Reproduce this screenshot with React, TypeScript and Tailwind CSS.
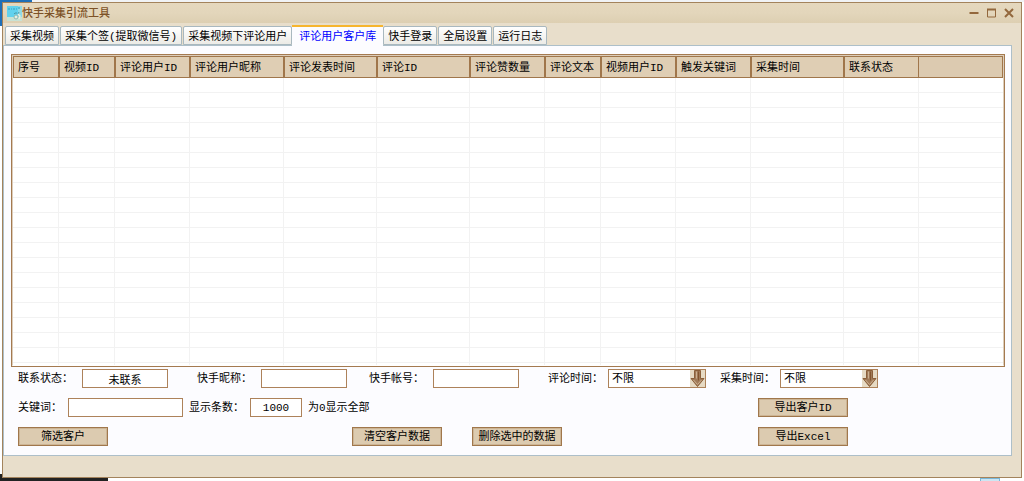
import React, { useState } from 'react';

const tabs = [
  '采集视频',
  '采集个签(提取微信号)',
  '采集视频下评论用户',
  '评论用户客户库',
  '快手登录',
  '全局设置',
  '运行日志',
];

const columns = [
  { title: '序号', width: 46 },
  { title: '视频ID', width: 56 },
  { title: '评论用户ID', width: 75 },
  { title: '评论用户昵称', width: 94 },
  { title: '评论发表时间', width: 93 },
  { title: '评论ID', width: 93 },
  { title: '评论赞数量', width: 75 },
  { title: '评论文本', width: 56 },
  { title: '视频用户ID', width: 75 },
  { title: '触发关键词', width: 75 },
  { title: '采集时间', width: 93 },
  { title: '联系状态', width: 75 },
];

const emptyRows = Array.from({ length: 20 });

const AppIcon: React.FC = () => (
  <svg width="15" height="15" viewBox="0 0 15 15" aria-hidden="true">
    <rect width="15" height="15" fill="#8fd9e6" />
    <rect width="11" height="11" fill="#62d2ee" />
    <rect y="11" width="15" height="4" fill="#c8e2d4" />
    <path d="M1 3h2M4 3h1M6 3h2M9 3h1M11 2h2" stroke="#45b3cf" strokeWidth="1.4" />
    <path d="M7 7l1 1M9 6v2M12 6l-1 2" stroke="#4b9aa8" />
    <circle cx="9" cy="11" r="2" fill="#e6eee4" stroke="#8fb8b0" />
    <path d="M11 8l2 2-1 3" fill="none" stroke="#f0efe0" strokeWidth="1.2" />
  </svg>
);

const ArrowIcon: React.FC = () => (
  <svg
    className="absolute right-px top-px pointer-events-none"
    width="15"
    height="17"
    viewBox="0 0 15 17"
    aria-hidden="true"
  >
    <rect width="15" height="17" fill="#e6dac4" />
    <path d="M4.500 0.500h6v8h3.500L7.500 16.500 1 8.500h3.500z" fill="#a07a58" stroke="#8a5f3a" />
    <path d="M6.500 1.500v7M3.500 10l4 4.500 4-4.500" fill="none" stroke="#cdb090" />
    <path d="M8.500 1.500v9" stroke="#83552f" />
  </svg>
);

interface FieldProps {
  id: string;
  label: string;
  value?: string;
  labelClass?: string;
  inputClass?: string;
}

const TextField: React.FC<FieldProps> = ({ id, label, value = '', labelClass = 'w-16', inputClass = 'w-[86px]' }) => (
  <div className="flex items-center shrink-0">
    <label htmlFor={id} className={labelClass}>{label}</label>
    <input
      id={id}
      defaultValue={value}
      className={`h-[19px] border border-[#ad825a] bg-white text-center outline-none ${inputClass}`}
    />
  </div>
);

const SelectField: React.FC<FieldProps> = ({ id, label }) => (
  <div className="flex items-center shrink-0">
    <label htmlFor={id} className="w-[60px]">{label}</label>
    <div className="relative">
      <select
        id={id}
        className="block w-[98px] h-[19px] appearance-none border border-[#ad825a] bg-white pl-[3px] outline-none"
      >
        <option>不限</option>
      </select>
      <ArrowIcon />
    </div>
  </div>
);

const SkinButton: React.FC<{ children: React.ReactNode }> = ({ children }) => (
  <button
    type="button"
    className="w-[90px] h-[19px] shrink-0 border border-[#a0774c] bg-[#dccbb0] text-center inset-shadow-[0_0_0_1px_#cdb595] pt-px"
  >
    {children}
  </button>
);

const TitleBar: React.FC = () => (
  <header className="flex items-center h-5 shrink-0 pl-1 pr-[7px] text-[#7d5227] bg-linear-to-b from-[#e5d8be] via-[#e3d6bb] to-[#ddcfb2]">
    <AppIcon />
    <h1 className="flex-1 pt-0.5 font-medium">快手采集引流工具</h1>
    <div className="flex items-center gap-2">
      <button type="button" aria-label="最小化">
        <svg width="10" height="10" viewBox="0 0 10 10">
          <path d="M0.500 5h9" stroke="#93683d" strokeWidth="2" />
        </svg>
      </button>
      <button type="button" aria-label="最大化">
        <svg width="9" height="10" viewBox="0 0 9 10">
          <path d="M0.500 1v8h8V1" fill="none" stroke="#93683d" />
          <path d="M0 1.500h9" stroke="#93683d" strokeWidth="2" />
        </svg>
      </button>
      <button type="button" aria-label="关闭">
        <svg width="10" height="10" viewBox="0 0 10 10">
          <path d="M1 1l8 8M9 1L1 9" stroke="#93683d" strokeWidth="2" />
        </svg>
      </button>
    </div>
  </header>
);

const CustomerTable: React.FC = () => (
  <div className="flex-1 min-h-0 overflow-hidden border border-[#a47a50] bg-white">
    <div className="h-full overflow-hidden border border-[#dccdbb] border-b-white">
      <table className="w-full table-fixed border-separate border-spacing-0">
        <colgroup>
          {columns.map((c) => (
            <col key={c.title} style={{ width: c.width }} />
          ))}
          <col />
        </colgroup>
        <thead>
          <tr className="h-[22px] bg-[#dfceb4]">
            {columns.map((c) => (
              <th
                key={c.title}
                className="h-[22px] p-0 pt-0.5 pl-1 text-left font-normal whitespace-nowrap border border-[#a0764b] leading-[18px]"
              >
                {c.title}
              </th>
            ))}
            <td className="h-[22px] p-0 border border-l-0 border-[#a0764b] bg-[#dccab0]" />
          </tr>
        </thead>
        <tbody>
          {emptyRows.map((_, i) => (
            <tr key={i}>
              {columns.map((c) => (
                <td key={c.title} className="h-[15px] p-0 border-b border-r border-[#f2f2f2]" />
              ))}
              <td className="h-[15px] p-0 border-b border-[#f2f2f2]" />
            </tr>
          ))}
        </tbody>
      </table>
    </div>
  </div>
);

const App: React.FC = () => {
  const [active, setActive] = useState(3);

  return (
    <div className="flex flex-col h-screen bg-white text-black text-[11px] leading-4 font-['Liberation_Mono','Noto_Sans_CJK_SC',monospace]">
      <div className="flex h-0.5 shrink-0">
        <div className="w-8 bg-[#1d6fb8]" />
        <div className="flex-1 bg-[#f1f3f5]" />
      </div>

      <div className="flex flex-1 min-h-0">
        <div className="flex flex-col w-0.5 shrink-0">
          <div className="h-6 bg-[#1d6fb8]" />
          <div className="flex-1 bg-white" />
          <div className="h-1 bg-[#222]" />
        </div>

        <div className="flex flex-col flex-1 min-w-0 mr-0.5 border border-[#a3835c] bg-[#e8decb]">
          <TitleBar />

          <nav role="tablist" className="flex items-end h-[22px] gap-px pl-0.5 shrink-0 relative z-10">
            {tabs.map((tab, i) => (
              <button
                key={tab}
                type="button"
                role="tab"
                aria-selected={i === active}
                onClick={() => setActive(i)}
                className={
                  i === active
                    ? 'h-[21px] -mb-px -mx-px px-[7px] pt-px shrink-0 whitespace-nowrap border-t-2 border-[#f6b52e] bg-[#fcfcff] text-[#0000ff]'
                    : 'h-[19px] px-1 pt-0.5 shrink-0 whitespace-nowrap rounded-t-xs border border-[#a9b8bf] bg-linear-to-b from-white to-[#ecebe6]'
                }
              >
                {tab}
              </button>
            ))}
          </nav>

          <main className="flex flex-col flex-1 min-h-0 mr-[9px] mb-[21px] pl-[7px] pr-1.5 pt-2 pb-[9px] border border-[#adbfc9] bg-[#fcfcff]">
            <CustomerTable />

            <form className="flex flex-col gap-2.5 pt-0.5 pl-[7px] shrink-0" onSubmit={(e) => e.preventDefault()}>
              <div className="flex items-center">
                <TextField id="status" label="联系状态：" value="未联系" />
                <div className="flex ml-[29px]">
                  <TextField id="nickname" label="快手昵称：" />
                </div>
                <div className="flex ml-[22px]">
                  <TextField id="account" label="快手帐号：" />
                </div>
                <div className="flex gap-3.5 ml-[29px]">
                  <SelectField id="commentTime" label="评论时间：" />
                  <SelectField id="collectTime" label="采集时间：" />
                </div>
              </div>

              <div className="flex items-center">
                <div className="flex items-center gap-1.5 w-[740px] shrink-0">
                  <TextField id="keyword" label="关键词：" labelClass="w-[50px]" inputClass="w-[115px]" />
                  <TextField id="count" label="显示条数：" value="1000" labelClass="w-[61px]" inputClass="w-[52px]" />
                  <span>为0显示全部</span>
                </div>
                <SkinButton>导出客户ID</SkinButton>
              </div>

              <div className="flex items-center">
                <div className="w-[334px] shrink-0">
                  <SkinButton>筛选客户</SkinButton>
                </div>
                <div className="flex gap-[30px] w-[406px] shrink-0">
                  <SkinButton>清空客户数据</SkinButton>
                  <SkinButton>删除选中的数据</SkinButton>
                </div>
                <SkinButton>导出Excel</SkinButton>
              </div>
            </form>
          </main>
        </div>
      </div>

      <div className="flex h-[3px] shrink-0">
        <div className="w-[108px] bg-[#222]" />
        <div className="flex-1" />
        <div className="w-5 mr-6 border-x border-t border-[#7ab8da] bg-[#cde6f3]" />
      </div>
    </div>
  );
};

export default App;
